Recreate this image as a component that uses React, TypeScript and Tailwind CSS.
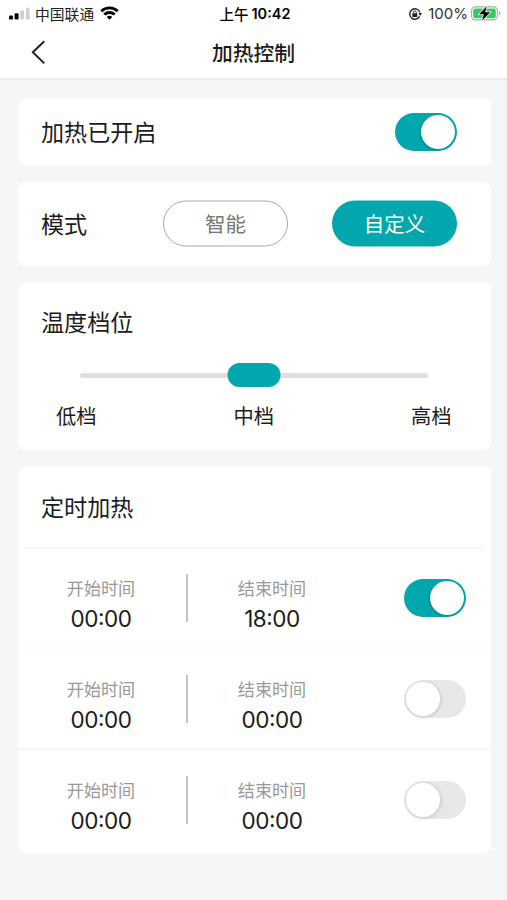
import { useState } from "react";
import clsx from "clsx";

const MODES = ["智能", "自定义"];
const LEVELS = ["低档", "中档", "高档"];

interface Timer {
  start: string;
  end: string;
  enabled: boolean;
}

const INITIAL_TIMERS: Timer[] = [
  { start: "00:00", end: "18:00", enabled: true },
  { start: "00:00", end: "00:00", enabled: false },
  { start: "00:00", end: "00:00", enabled: false },
];

interface ToggleProps {
  checked: boolean;
  onChange: () => void;
}

function Toggle({ checked, onChange }: ToggleProps) {
  return (
    <button
      role="switch"
      aria-checked={checked}
      onClick={onChange}
      className={clsx(
        "flex h-[38px] w-[62.5px] shrink-0 items-center rounded-full px-0.5",
        checked ? "justify-end bg-[#02a7ae]" : "justify-start bg-[#e8e8e9]"
      )}
    >
      <span
        className={clsx(
          "size-[34px] rounded-full bg-white",
          checked ? "shadow-[-1px_1px_3px_rgba(0,0,0,0.2)]" : "shadow-[1px_1px_4px_rgba(0,0,0,0.15)]"
        )}
      />
    </button>
  );
}

function StatusBar() {
  return (
    <div className="flex h-7 items-center justify-between pl-[9px] pr-[6px] text-black">
      <div className="flex w-[180px] items-center">
        <svg width="22" height="14" viewBox="0 0 22 14">
          <rect x="0" y="8.5" width="4" height="4" rx="1.2" />
          <rect x="5.6" y="6.2" width="4" height="6.3" rx="1.2" />
          <rect x="11.3" y="3.3" width="3.8" height="9.2" rx="1.2" fill="#d0d0d0" />
          <rect x="16.8" y="0.8" width="3.8" height="11.7" rx="1.2" fill="#d0d0d0" />
        </svg>
        <span className="ml-1 pt-px text-[14.8px] leading-7 text-[#222]">中国联通</span>
        <svg className="ml-[6px] -translate-y-px" width="19" height="14" viewBox="0 0 19 14" fill="none" stroke="#000" strokeWidth="2.8">
          <path d="M1.3 5.2a11.8 11.8 0 0 1 16.4 0" />
          <path d="M4.3 8.6a7.5 7.5 0 0 1 10.4 0" />
          <path d="M9.5 13.8 6.7 11a3.9 3.9 0 0 1 5.6 0z" fill="#000" stroke="none" />
        </svg>
      </div>
      <div className="flex items-center gap-[3px] text-[14.5px] leading-7">
        <span className="pt-px font-medium">上午</span>
        <span className="font-semibold">10:42</span>
      </div>
      <div className="flex w-[180px] items-center justify-end">
        <svg width="14" height="14" viewBox="0 0 14 14" fill="none" stroke="#222" strokeWidth="1.4">
          <path d="M11.6 9.4A5.2 5.2 0 1 1 11.9 5.4" />
          <path d="M10.4 6h3.6l-1.8 3z" fill="#222" stroke="none" />
          <rect x="4.3" y="6.3" width="5" height="3.7" rx="0.6" fill="#222" stroke="none" />
          <path d="M5.3 6.6V5.4a1.5 1.5 0 0 1 3 0v1.2" strokeWidth="1" />
        </svg>
        <span className="ml-[6px] text-[15px] leading-7 text-[#333]">100%</span>
        <svg className="ml-[3px] -translate-y-[0.5px]" width="30" height="16" viewBox="0 0 30 16">
          <rect x="0.6" y="1.4" width="25.8" height="13" rx="3.8" fill="#fff" stroke="#a9a9a9" strokeWidth="1.1" />
          <rect x="2.2" y="3" width="22.6" height="9.8" rx="2.2" fill="#35cc60" />
          <path d="M27.9 5.8c1.9.6 1.9 3.6 0 4.2z" fill="#a9a9a9" />
          <path d="M15.7.8 8 8.8h4.8L11 15.2l8.2-8.4h-5z" fill="#000" stroke="#fff" strokeWidth="1.4" paintOrder="stroke" />
        </svg>
      </div>
    </div>
  );
}

function TimeField({ label, value }: { label: string; value: string }) {
  const [hours, minutes] = value.split(":");

  return (
    <div className="flex w-[100px] flex-col items-center pt-4">
      <span className="text-[17.1px] leading-6 text-[#999]">{label}</span>
      <span className="mt-0.5 text-[22.5px] leading-8 tracking-[-0.02em]">
        {hours}
        <span className="relative -top-0.5">:</span>
        {minutes}
      </span>
    </div>
  );
}

export default function App() {
  const [heating, setHeating] = useState(true);
  const [mode, setMode] = useState(1);
  const [level, setLevel] = useState(1);
  const [timers, setTimers] = useState(INITIAL_TIMERS);

  const toggleTimer = (index: number) => {
    setTimers(timers.map((t, i) => (i === index ? { ...t, enabled: !t.enabled } : t)));
  };

  return (
    <div className="h-[900px] w-[507px] overflow-hidden bg-[#f5f6f8] font-[Inter,'Noto_Sans_CJK_SC',sans-serif] text-[#1c1c1c]">
      <header className="h-20 border-b-2 border-[#e9eaeb] bg-white">
        <StatusBar />
        <div className="flex h-12 items-center justify-between px-[30px]">
          <button className="w-4" aria-label="返回">
            <svg width="16" height="26" viewBox="0 0 16 26" fill="none" stroke="#1c1c1c" strokeWidth="1.9">
              <path d="M14.3 2.2 2.8 13.3 14.3 24.4" />
            </svg>
          </button>
          <h1 className="pt-[3px] text-[20.8px] font-medium">加热控制</h1>
          <span className="w-4" />
        </div>
      </header>

      <main className="flex flex-col gap-4 pl-[17.5px] pr-[16.5px] pt-[18px]">
        {/* Power */}
        <section className="flex h-[68px] items-center justify-between rounded-lg bg-white pl-[23.5px] pr-[33.5px]">
          <h2 className="pt-0.5 text-[23.1px]">加热已开启</h2>
          <Toggle checked={heating} onChange={() => setHeating(!heating)} />
        </section>

        {/* Mode */}
        <section className="flex h-[84px] items-center justify-between rounded-lg bg-white pl-[23.5px] pr-[33.5px]">
          <h2 className="pt-0.5 text-[23.1px]">模式</h2>
          <div className="flex -translate-y-[0.5px] gap-11">
            {MODES.map((name, i) => (
              <button
                key={name}
                onClick={() => setMode(i)}
                className={clsx(
                  "h-[46px] w-[125px] rounded-full pt-0.5 text-[20.5px]",
                  mode === i ? "bg-[#02a7ae] text-white" : "border border-[#aaa] text-[#777]"
                )}
              >
                {name}
              </button>
            ))}
          </div>
        </section>

        {/* Temperature level */}
        <section className="h-[168px] rounded-lg bg-white pt-6">
          <h2 className="pl-[23.5px] text-[23.1px] leading-[34px]">温度档位</h2>
          <div className="relative mx-[62.5px] mt-[23px] flex h-6 items-center">
            <div className="h-[5px] w-full rounded-full bg-[#e0e0e0]" />
            <div
              className="absolute h-6 w-[53px] -translate-x-1/2 rounded-full bg-[#02a7ae]"
              style={{ left: `${level * 50}%` }}
            />
          </div>
          <div className="mt-[15px] flex justify-between pl-[38.5px] pr-[39px]">
            {LEVELS.map((name, i) => (
              <button key={name} onClick={() => setLevel(i)} className="text-[20.3px] leading-[30px]">
                {name}
              </button>
            ))}
          </div>
        </section>

        {/* Timers */}
        <section className="h-[387px] overflow-hidden rounded-lg bg-white">
          <h2 className="flex h-[81px] items-center pl-[23.5px] pt-[3px] text-[23.1px]">定时加热</h2>
          <div className="mx-[6.5px] h-px bg-[#f1f2f3]" />
          {timers.map((timer, i) => (
            <div
              key={i}
              className={clsx(
                "flex h-[101px] items-center border-b-2 pl-[33.5px] pr-[24.5px]",
                i === 0 && "border-[#fcfcfc]",
                i === 1 && "border-[#f3f4f5]",
                i === 2 && "border-transparent"
              )}
            >
              <TimeField label="开始时间" value={timer.start} />
              <div className="ml-[35px] mr-[34px] h-12 w-0.5 bg-[#c4c4c4]" />
              <TimeField label="结束时间" value={timer.end} />
              <div className="ml-auto">
                <Toggle checked={timer.enabled} onChange={() => toggleTimer(i)} />
              </div>
            </div>
          ))}
        </section>
      </main>
    </div>
  );
}
